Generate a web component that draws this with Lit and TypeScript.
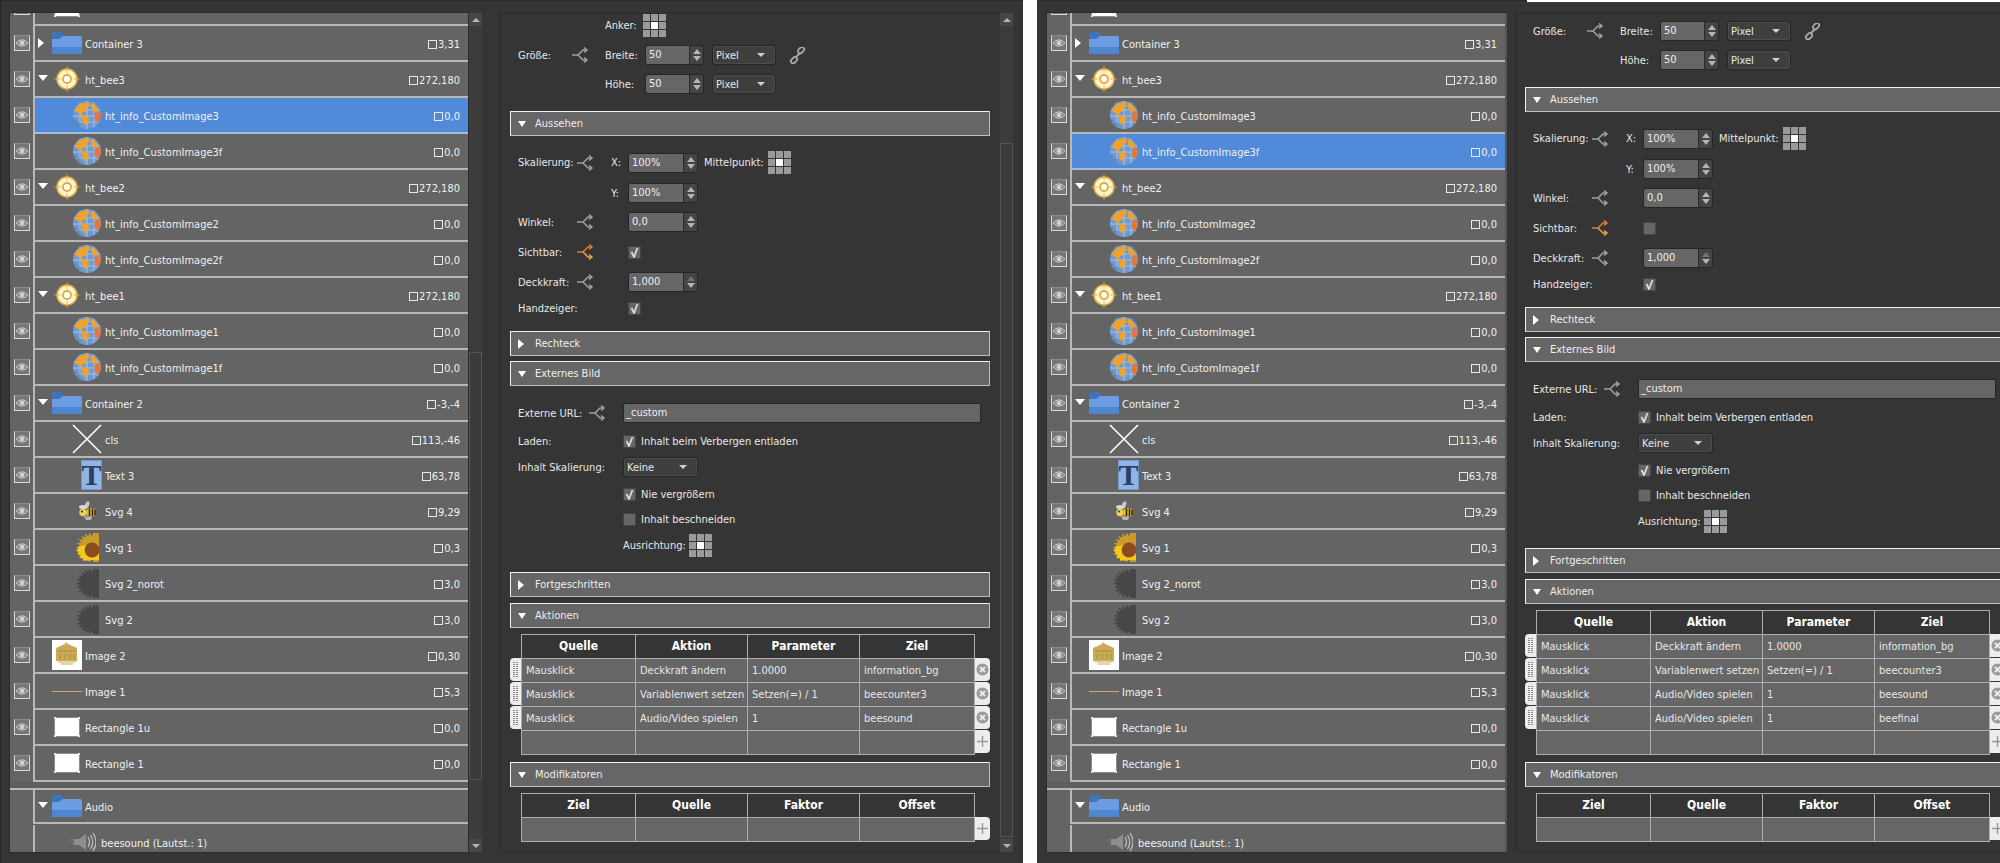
import { LitElement, html, css, unsafeCSS } from 'lit';
import { customElement, property } from 'lit/decorators.js';

const FONT = unsafeCSS('"DejaVu Sans Condensed", "DejaVu Sans", "Liberation Sans", sans-serif');

// small icons shared by both panels
const folderIcon = () => html`<svg width="30" height="22" viewBox="0 0 30 22">
  <path d="M0 2q0-2 2-2h7l3 3v6H0z" fill="#3f74bd"/>
  <path d="M0 7h7l4-3h17q2 0 2 2v9H0z" fill="#6c9de2"/>
  <path d="M0 15h30v6q0 1-1 1H1q-1 0-1-1z" fill="#4f86d2"/>
</svg>`;

const hotspotIcon = () => html`<svg width="28" height="28" viewBox="0 0 28 28">
  <path d="M14 0l1.300 6h-2.600zM14 28l-1.300-6h2.600zM0 14l6-1.300v2.600zM28 14l-6 1.300v-2.600z" fill="#d8a22a"/>
  <circle cx="14" cy="14" r="10" fill="#fff3d2" stroke="#e0b03c" stroke-width="1.500"/>
  <circle cx="14" cy="14" r="4" fill="#fff" stroke="#e0ad38" stroke-width="1.800"/>
  <path d="M14 5v3M14 20v3M5 14h3M20 14h3" stroke="#e6bc5a" stroke-width="1"/>
</svg>`;

const globeIcon = () => html`<svg width="28" height="28" viewBox="0 0 28 28">
  <circle cx="14" cy="14" r="14" fill="#6f9ad0"/>
  <path d="M7 1.800v24.400M14 0v28M21 1.800v24.400M1 9h26M0 15h28M2 21h24" stroke="#a3c3ea" stroke-width="1" fill="none"/>
  <path d="M2 10q1-6 8-8l6-1 1 4-4 2 1 3-4 1-1 3-4-2z" fill="#f0a22e"/>
  <path d="M8 14l6 1 3 3-3 3-1 4-3-3z" fill="#f0a22e"/>
  <path d="M18 2q6 2 8 8l-5 1-3-4z" fill="#f0a22e"/>
  <path d="M21 13l7-2q.5 6-3 11l-3-3z" fill="#e8743a"/>
  <path d="M0 17q1 7 8 10v-5l-4-3z" fill="#5d7fa8" opacity=".6"/>
</svg>`;

const crossIcon = () => html`<svg width="30" height="30" viewBox="0 0 30 30">
  <path d="M1 1l28 28M29 1L1 29" stroke="#fff" stroke-width="1.600"/>
</svg>`;

const beeIcon = () => html`<svg width="20" height="20" viewBox="0 0 20 20">
  <ellipse cx="10" cy="4" rx="2" ry="4" fill="#c8c8c8" transform="rotate(20 10 4)"/>
  <ellipse cx="6" cy="6" rx="4" ry="2" fill="#d8d8d8"/>
  <ellipse cx="14" cy="11.500" rx="5" ry="4.500" fill="#e9bc1e"/>
  <path d="M12.500 7.400v8.200M15.500 7.400v8.200M18 9v5" stroke="#222" stroke-width="1.500"/>
  <circle cx="6" cy="11.500" r="3.700" fill="#efce58"/>
  <circle cx="5" cy="10.500" r=".9" fill="#222"/>
  <path d="M7 15l2 4h5l1-3" fill="#b4b4b4"/>
</svg>`;

// spiky half disc cut at its right side, shared by the sunflower and its grey shadows
const spikes = () => {
  let d = 'M23 0';
  for (let i = 0; i <= 24; i++) {
    const a = Math.PI * (0.45 + (i / 24) * 1.1);
    const r = i % 2 ? 11.500 : 15.500;
    d += `L${(15.500 + Math.cos(a) * r).toFixed(1)} ${(14.500 - Math.sin(a) * r).toFixed(1)}`;
  }
  return d + 'L23 29Z';
};
const sunflowerIcon = () => html`<svg width="23" height="29" viewBox="0 0 23 29">
  <path d="${spikes()}" fill="#c99b2c"/>
  <path d="M1 14l2 1-3 2 3 2-2 2 4 1-2 3 4 0v3l3-1 2 1 3-1h8V20L10 12z" fill="#f6c916"/>
  <circle cx="16" cy="17" r="7.400" fill="#8c4a20"/>
</svg>`;
const shadowIcon = () => html`<svg width="23" height="29" viewBox="0 0 23 29">
  <path d="${spikes()}" fill="#474747"/>
</svg>`;

const houseIcon = () => html`<svg width="30" height="30" viewBox="0 0 30 30">
  <rect width="30" height="30" fill="#fff"/>
  <path d="M4 8l9-4 1-2 2 2 9 4v13H4z" fill="#c9aa55"/>
  <path d="M6 11h18M8 14v5M13 14v5M18 14v5M22 14v5" stroke="#a98c3e" stroke-width="1"/>
  <path d="M6 22h18M9 24h12" stroke="#c9aa55" stroke-width="1"/>
</svg>`;

const lineIcon = () => html`<svg width="30" height="3" viewBox="0 0 30 3"><path d="M0 1.500h30" stroke="#c9ad62" stroke-width="1"/></svg>`;

const rectIcon = () => html`<svg width="26" height="20" viewBox="0 0 26 20">
  <rect x=".5" y=".5" width="25" height="19" fill="none" stroke="#8c8c8c"/>
  <rect x="1" y="1" width="24" height="18" rx="1" fill="#fff"/>
  <path d="M0 0h2v2H0zM24 0h2v2h-2zM0 18h2v2H0zM24 18h2v2h-2z" fill="#e4e4e4"/>
</svg>`;

const speakerIcon = () => html`<svg width="27" height="20" viewBox="0 0 27 20">
  <path d="M1 7h4v3H1zM3 11h3v2H3z" fill="#6a6a78"/>
  <path d="M5 7h5l7-5v16l-7-5H5z" fill="#8e8e8e"/>
  <path d="M19 5q3 5 0 10M21.500 3q4.500 7 0 14M24 1q6 9 0 18" stroke="#bdbdbd" stroke-width="1.300" fill="none"/>
</svg>`;

const eyeIcon = () => html`<svg width="14" height="14" viewBox="0 0 14 14">
  <path d="M1 7q6-6.500 12 0-6 6.500-12 0z" fill="#8a8a8a" stroke="#c8c8c8" stroke-width="1"/>
  <circle cx="7" cy="7" r="2.400" fill="#d0d0d0"/>
</svg>`;

const shareIcon = (orange = false) => {
  const top = orange ? '#e0783a' : '#a0a0a0';
  const bottom = orange ? '#eaa23a' : '#a0a0a0';
  return html`<svg width="17" height="16" viewBox="0 0 17 16" fill="none" stroke-width="1.500">
    <path d="M0 8h6l5-5h3M12 .5l3 2.500-3 2.500" stroke="${top}"/>
    <path d="M6 8l5 5h3M12 10.500l3 2.500-3 2.500" stroke="${bottom}"/>
  </svg>`;
};

const chainIcon = () => html`<svg width="17" height="17" viewBox="0 0 17 17" fill="none" stroke="#a8a8a8" stroke-width="1.800">
  <rect x="8.500" y="1" width="7" height="4.500" rx="2.200" transform="rotate(-45 12 3.200)"/>
  <rect x="1.500" y="11" width="7" height="4.500" rx="2.200" transform="rotate(-45 5 13.200)"/>
  <path d="M6.500 10.500l4-4"/>
</svg>`;

const removeIcon = () => html`<svg width="13" height="13" viewBox="0 0 13 13">
  <circle cx="6.500" cy="6.500" r="6" fill="#9a9a9a"/>
  <path d="M4 4l5 5M9 4l-5 5" stroke="#eee" stroke-width="1.800"/>
</svg>`;

const plusIcon = () => html`<svg width="11" height="11" viewBox="0 0 11 11">
  <path d="M5.500 0v11M0 5.500h11" stroke="#9a9a9a" stroke-width="1.400"/>
</svg>`;

type Row = { name?: string; val?: string; kind: string; level?: number; arrow?: string };

const ROWS: Row[] = [
  { kind: 'rect' },
  { name: 'Container 3', val: '3,31', kind: 'folder', arrow: 'r' },
  { name: 'ht_bee3', val: '272,180', kind: 'hot', arrow: 'd' },
  { name: 'ht_info_CustomImage3', val: '0,0', kind: 'globe', level: 1 },
  { name: 'ht_info_CustomImage3f', val: '0,0', kind: 'globe', level: 1 },
  { name: 'ht_bee2', val: '272,180', kind: 'hot', arrow: 'd' },
  { name: 'ht_info_CustomImage2', val: '0,0', kind: 'globe', level: 1 },
  { name: 'ht_info_CustomImage2f', val: '0,0', kind: 'globe', level: 1 },
  { name: 'ht_bee1', val: '272,180', kind: 'hot', arrow: 'd' },
  { name: 'ht_info_CustomImage1', val: '0,0', kind: 'globe', level: 1 },
  { name: 'ht_info_CustomImage1f', val: '0,0', kind: 'globe', level: 1 },
  { name: 'Container 2', val: '-3,-4', kind: 'folder', arrow: 'd' },
  { name: 'cls', val: '113,-46', kind: 'cross', level: 1 },
  { name: 'Text 3', val: '63,78', kind: 'text', level: 1 },
  { name: 'Svg 4', val: '9,29', kind: 'bee', level: 1 },
  { name: 'Svg 1', val: '0,3', kind: 'sun', level: 1 },
  { name: 'Svg 2_norot', val: '3,0', kind: 'shadow', level: 1 },
  { name: 'Svg 2', val: '3,0', kind: 'shadow', level: 1 },
  { name: 'Image 2', val: '0,30', kind: 'house' },
  { name: 'Image 1', val: '5,3', kind: 'line' },
  { name: 'Rectangle 1u', val: '0,0', kind: 'rect' },
  { name: 'Rectangle 1', val: '0,0', kind: 'rect' },
];

@customElement('tree-panel')
export class TreePanel extends LitElement {
  @property() selected = '';
  @property({ type: Boolean }) narrow = false;

  static styles = css`
    :host { display: flex; flex: none; height: 839px; font: 11px ${FONT}; color: #f0f0f0; }
    .tree { width: 458px; height: 839px; overflow: hidden; background: #646464; box-shadow: 0 0 0 1px #2b2b2b; }
    .rows { margin-top: -23px; }
    .row { display: flex; align-items: center; height: 36px; box-sizing: border-box; border-bottom: 2px solid #b8b8b8; }
    .row.sel { background: #518ad9; border-bottom-color: #a9bdd8; }
    .eye { flex: none; width: 23px; height: 34px; margin-bottom: -2px; padding-bottom: 2px; border-right: 2px solid #b8b8b8; box-sizing: content-box; display: flex; align-items: center; background: #646464; }
    .eye span { width: 14px; height: 14px; margin-left: 4px; border: 1px solid #d8d8d8; border-top-color: #8a8a8a; background: #767676; display: flex; }
    .eye.blank span { display: none; }
    .arrow { flex: none; width: 17px; padding-left: 3px; box-sizing: border-box; height: 10px; }
    .tri-d { width: 0; height: 0; border: 4px solid transparent; border-top: 6px solid #fff; border-left-width: 5px; border-right-width: 5px; border-bottom-width: 0; margin-top: 1px; }
    .tri-r { width: 0; height: 0; border: 5px solid transparent; border-left: 6px solid #fff; border-right-width: 0; }
    .ico { flex: none; width: 30px; display: flex; justify-content: center; align-items: center; }
    .lvl1 { margin-left: 20px; }
    .name { margin-left: 3px; white-space: nowrap; position: relative; top: 1px; }
    .val { margin-left: auto; padding-right: 8px; white-space: nowrap; display: flex; align-items: center; position: relative; top: 1px; }
    .val i { width: 7px; height: 7px; border: 1px solid #e8e8e8; margin-right: 1px; }
    .t-ico { width: 21px; height: 30px; margin-left: 8px; box-sizing: border-box; background: #8fb4e6; border: 1px solid #7397c8; color: #2b3e63; font: bold 30px/28px "Liberation Serif", serif; text-align: center; }
    .gap { height: 6px; border-bottom: 2px solid #b8b8b8; background: #5e5e5e; }
    .audio { height: 34px; }
    .audio .eye { height: 32px; }
    .sb { flex: none; width: 13px; height: 839px; display: flex; flex-direction: column; background: #3c3c3c; margin-left: 1px; }
    .sb.narrow { width: 2px; background: #555; margin-left: 0; }
    .sb b { flex: none; height: 13px; background: #474747; display: flex; align-items: center; justify-content: center; }
    .sb .fill { flex: 1; }
    .sb .handle { flex: none; height: 428px; border: 1px solid #545454; box-sizing: border-box; background: #3a3a3a; }
    .up { width: 0; height: 0; border: 4px solid transparent; border-bottom: 4px solid #b8b8b8; border-top-width: 0; }
    .dn { width: 0; height: 0; border: 4px solid transparent; border-top: 4px solid #b8b8b8; border-bottom-width: 0; }
  `;

  icon(kind: string) {
    if (kind === 'folder') return folderIcon();
    if (kind === 'hot') return hotspotIcon();
    if (kind === 'globe') return globeIcon();
    if (kind === 'cross') return crossIcon();
    if (kind === 'text') return html`<span class="t-ico">T</span>`;
    if (kind === 'bee') return beeIcon();
    if (kind === 'sun') return sunflowerIcon();
    if (kind === 'shadow') return shadowIcon();
    if (kind === 'house') return houseIcon();
    if (kind === 'line') return lineIcon();
    return rectIcon();
  }

  renderRow(r: Row) {
    return html`<div class="row ${r.name && r.name === this.selected ? 'sel' : ''}">
      <div class="eye"><span>${eyeIcon()}</span></div>
      <div class="arrow">${r.arrow === 'd' ? html`<div class="tri-d"></div>` : r.arrow === 'r' ? html`<div class="tri-r"></div>` : ''}</div>
      <div class="ico ${r.level ? 'lvl1' : ''}">${this.icon(r.kind)}</div>
      ${r.name ? html`<span class="name">${r.name}</span>` : ''}
      ${r.val ? html`<span class="val"><i></i>${r.val}</span>` : ''}
    </div>`;
  }

  render() {
    return html`
      <div class="tree">
        <div class="rows">
          ${ROWS.map((r) => this.renderRow(r))}
          <div class="gap"></div>
          <div class="row audio">
            <div class="eye blank"></div>
            <div class="arrow"><div class="tri-d"></div></div>
            <div class="ico">${folderIcon()}</div>
            <span class="name">Audio</span>
          </div>
          <div class="row" style="border:0">
            <div class="eye blank"></div>
            <div class="arrow"></div>
            <div class="ico lvl1" style="margin-left:17px;width:27px">${speakerIcon()}</div>
            <span class="name" style="margin-left:5px">beesound (Lautst.: 1)</span>
          </div>
        </div>
      </div>
      ${this.narrow
        ? html`<div class="sb narrow"></div>`
        : html`<div class="sb">
            <b><div class="up"></div></b>
            <div class="fill"></div>
            <div class="handle"></div>
            <div class="fill" style="flex:none;height:59px"></div>
            <b><div class="dn"></div></b>
          </div>`}
    `;
  }
}

type Action = string[];

@customElement('props-panel')
export class PropsPanel extends LitElement {
  @property({ type: Number }) offset = 0;
  @property({ type: Boolean }) visible = true;
  @property({ attribute: false }) actions: Action[] = [];
  @property({ type: Boolean }) clipped = false;

  static styles = css`
    :host { display: flex; flex: none; height: 839px; font: 11px ${FONT}; color: #e8e8e8; }
    .frame { width: 500px; height: 839px; border: 1px solid #2a2a2a; border-right: 0; box-sizing: border-box; overflow: hidden; background: #353535; }
    .row { display: flex; align-items: center; height: 20px; padding-left: 17px; white-space: nowrap; }
    .r16 { height: 16px; }
    .r23 { height: 23px; }
    .sec { display: flex; align-items: center; height: 25px; width: 480px; margin-left: 9px; box-sizing: border-box; background: #666; border: 1px solid #bdbdbd; border-top-color: #f2f2f2; border-left-color: #f2f2f2; color: #eee; padding-left: 7px; }
    .sec span { margin-left: 8px; }
    .td { width: 0; height: 0; border: 4px solid transparent; border-top: 6px solid #fff; border-left-width: 4.500px; border-right-width: 4.500px; border-bottom-width: 0; margin-right: 1px; }
    .tr { width: 0; height: 0; border: 5px solid transparent; border-left: 6px solid #fff; border-right-width: 0; margin-right: 3px; }
    .spin { display: flex; height: 20px; box-sizing: border-box; border: 1px solid #262626; border-radius: 3px; flex: none; overflow: hidden; }
    .spin .v { flex: 1; background: #666; padding-left: 3px; line-height: 17px; color: #eee; }
    .spin .st { flex: none; width: 13px; background: #444; border-left: 1px solid #2a2a2a; display: flex; flex-direction: column; align-items: center; justify-content: center; gap: 2px; }
    .up { width: 0; height: 0; border: 4px solid transparent; border-bottom: 5px solid #b4b4b4; border-top-width: 0; }
    .up.dim { border-bottom-color: #707070; }
    .dn { width: 0; height: 0; border: 4px solid transparent; border-top: 5px solid #b4b4b4; border-bottom-width: 0; }
    .sel { flex: none; display: flex; align-items: center; justify-content: space-between; height: 20px; box-sizing: border-box; border: 1px solid #262626; border-radius: 3px; background: #3f3f3f; box-shadow: inset 0 0 0 1px #4c4c4c; padding: 0 10px 0 3px; }
    .sel .dn { border-top: 4px solid #d0d0d0; border-left-width: 4px; border-right-width: 4px; }
    .check { flex: none; width: 13px; height: 13px; box-sizing: border-box; background: #666; border: 1px solid #444; display: flex; }
    .grid { flex: none; display: grid; grid-template-columns: repeat(3, 7px); grid-auto-rows: 7px; gap: 1px; }
    .grid i { background: #9a9a9a; }
    .grid i.c { background: #fff; }
    .ml16 { margin-left: 16px; }
    .w38 { flex: none; width: 38px; }
    .w40 { flex: none; width: 40px; }
    .w54 { flex: none; width: 54px; }
    .w59 { flex: none; width: 59px; }
    .w64 { flex: none; width: 64px; }
    .w66 { flex: none; width: 66px; }
    .w71 { flex: none; width: 71px; }
    .w105 { flex: none; width: 105px; }
    .w110 { flex: none; width: 110px; }
    .axis { flex: none; margin-left: 17px; width: 17px; }
    .url { flex: none; margin-left: 17px; width: 358px; height: 20px; box-sizing: border-box; background: #666; border: 1px solid #262626; border-radius: 2px; line-height: 18px; padding-left: 2px; color: #eee; }
    .tbl { margin-left: 9px; }
    .tr-row { display: flex; height: 24px; }
    .hd { flex: none; width: 11px; height: 24px; }
    .hd.grip { height: 23px; box-sizing: border-box; background: #ededed; border-radius: 4px 0 0 4px; display: flex; justify-content: center; gap: 1px; padding: 4px 0; }
    .hd.grip u { width: 2px; background: repeating-linear-gradient(#888 0 1px, transparent 1px 2px); text-decoration: none; }
    .cell { flex: none; box-sizing: border-box; background: #666; border-top: 1px solid #aeaeae; border-left: 1px solid #aeaeae; padding-left: 4px; line-height: 23px; color: #e8e8e8; white-space: nowrap; overflow: hidden; }
    .c1 { width: 114px; }
    .c2 { width: 112px; }
    .c3 { width: 112px; }
    .c4 { width: 116px; border-right: 1px solid #aeaeae; }
    .th { background: #353535; font: bold 12px/23px ${FONT}; color: #fff; text-align: center; padding-left: 0; }
    .end { border-bottom: 1px solid #aeaeae; height: 25px; }
    .btn { flex: none; width: 15px; height: 23px; background: #ededed; border-radius: 0 4px 4px 0; display: flex; align-items: center; justify-content: center; }
    .mt5 { margin-top: 5px; } .mt6 { margin-top: 6px; } .mt7 { margin-top: 7px; } .mt8 { margin-top: 8px; }
    .mt9 { margin-top: 9px; } .mt10 { margin-top: 10px; } .mt15 { margin-top: 15px; } .mt17 { margin-top: 17px; }
    .sb { flex: none; width: 13px; height: 839px; display: flex; flex-direction: column; background: #3c3c3c; }
    .sb b { flex: none; height: 13px; background: #474747; display: flex; align-items: center; justify-content: center; }
    .sb .handle { flex: 1; border: 1px solid #545454; box-sizing: border-box; background: #3a3a3a; margin-bottom: 2px; }
    .sb .up, .sb .dn { border-width: 4px; }
    .sb .up { border-top-width: 0; border-bottom-width: 4px; }
    .sb .dn { border-bottom-width: 0; border-top-width: 4px; }
  `;

  spin(val: string, width: number, dim = false) {
    return html`<div class="spin" style="width:${width}px">
      <div class="v">${val}</div>
      <div class="st"><div class="up ${dim ? 'dim' : ''}"></div><div class="dn"></div></div>
    </div>`;
  }

  select(val: string, width: number) {
    return html`<div class="sel" style="width:${width}px"><span>${val}</span><div class="dn"></div></div>`;
  }

  check(on: boolean) {
    return html`<div class="check">${on
      ? html`<svg width="11" height="11" viewBox="0 0 11 11"><path d="M2.500 5l2.500 5 3.500-9" fill="none" stroke="#e0e0e0" stroke-width="1.700"/></svg>`
      : ''}</div>`;
  }

  grid() {
    return html`<div class="grid">${[0, 1, 2, 3, 4, 5, 6, 7, 8].map((i) => html`<i class="${i === 4 ? 'c' : ''}"></i>`)}</div>`;
  }

  section(title: string, open: boolean, mt: string) {
    return html`<div class="sec ${mt}"><div class="${open ? 'td' : 'tr'}"></div><span>${title}</span></div>`;
  }

  table(head: string[], rows: Action[], mt: string) {
    const cols = ['c1', 'c2', 'c3', 'c4'];
    return html`<div class="tbl ${mt}">
      <div class="tr-row">
        <div class="hd"></div>
        ${head.map((h, i) => html`<div class="cell th ${cols[i]}">${h}</div>`)}
      </div>
      ${rows.map((r) => html`<div class="tr-row">
        <div class="hd grip"><u></u><u></u></div>
        ${r.map((c, i) => html`<div class="cell ${cols[i]}">${c}</div>`)}
        <div class="btn">${removeIcon()}</div>
      </div>`)}
      <div class="tr-row">
        <div class="hd"></div>
        ${cols.map((c) => html`<div class="cell end ${c}"></div>`)}
        <div class="btn">${plusIcon()}</div>
      </div>
    </div>`;
  }

  render() {
    // the anchor row (23 + 8px) is scrolled out of view in the second window
    return html`
      <div class="frame">
        ${this.offset
          ? html`<div style="height:${31 - this.offset}px"></div>`
          : html`<div class="row r23" style="padding-left:104px"><span class="w38">Anker:</span>${this.grid()}</div><div style="height:8px"></div>`}

        <div class="row">
          <span class="w54">Größe:</span>${shareIcon()}
          <span class="w40 ml16">Breite:</span>${this.spin('50', 59)}
          <span style="width:8px"></span>${this.select('Pixel', 64)}
          <span style="width:13px"></span>${chainIcon()}
        </div>
        <div class="row mt9" style="padding-left:104px">
          <span class="w40">Höhe:</span>${this.spin('50', 59)}
          <span style="width:8px"></span>${this.select('Pixel', 64)}
        </div>

        ${this.section('Aussehen', true, 'mt17')}

        <div class="row r23 mt15">
          <span class="w59">Skalierung:</span>${shareIcon()}
          <span class="axis">X:</span>${this.spin('100%', 70)}
          <span style="width:6px"></span><span class="w64">Mittelpunkt:</span>${this.grid()}
        </div>
        <div class="row mt9" style="padding-left:93px"><span class="axis">Y:</span>${this.spin('100%', 70)}</div>
        <div class="row mt9"><span class="w59">Winkel:</span>${shareIcon()}<span class="axis"></span>${this.spin('0,0', 70)}</div>
        <div class="row mt10"><span class="w59">Sichtbar:</span>${shareIcon(true)}<span class="axis"></span>${this.check(this.visible)}</div>
        <div class="row mt10"><span class="w59">Deckkraft:</span>${shareIcon()}<span class="axis"></span>${this.spin('1,000', 70, true)}</div>
        <div class="row r16 mt8"><span class="w110">Handzeiger:</span>${this.check(true)}</div>

        ${this.section('Rechteck', false, 'mt15')}
        ${this.section('Externes Bild', true, 'mt5')}

        <div class="row mt17"><span class="w71">Externe URL:</span>${shareIcon()}<div class="url">_custom</div></div>
        <div class="row r16 mt10"><span class="w105">Laden:</span>${this.check(true)}<span style="margin-left:5px">Inhalt beim Verbergen entladen</span></div>
        <div class="row mt8"><span class="w105">Inhalt Skalierung:</span>${this.select('Keine', 75)}</div>
        <div class="row r16 mt9" style="padding-left:122px">${this.check(true)}<span style="margin-left:5px">Nie vergrößern</span></div>
        <div class="row r16 mt9" style="padding-left:122px">${this.check(false)}<span style="margin-left:5px">Inhalt beschneiden</span></div>
        <div class="row r23 mt7" style="padding-left:122px"><span class="w66">Ausrichtung:</span>${this.grid()}</div>

        ${this.section('Fortgeschritten', false, 'mt15')}
        ${this.section('Aktionen', true, 'mt6')}
        ${this.table(['Quelle', 'Aktion', 'Parameter', 'Ziel'], this.actions, 'mt6')}
        ${this.section('Modifikatoren', true, 'mt8')}
        ${this.table(['Ziel', 'Quelle', 'Faktor', 'Offset'], [], 'mt6')}
      </div>
      ${this.clipped
        ? ''
        : html`<div class="sb">
            <b><div class="up"></div></b>
            <div class="handle" style="margin-top:117px"></div>
            <b><div class="dn"></div></b>
          </div>`}
    `;
  }
}

const BASE_ACTIONS: Action[] = [
  ['Mausklick', 'Deckkraft ändern', '1.0000', 'information_bg'],
  ['Mausklick', 'Variablenwert setzen', 'Setzen(=) / 1', 'beecounter3'],
  ['Mausklick', 'Audio/Video spielen', '1', 'beesound'],
];

@customElement('app-root')
export class AppRoot extends LitElement {
  static styles = css`
    :host { display: flex; width: 2000px; height: 863px; background: #fff; overflow: hidden; }
    .win { flex: none; height: 863px; background: #353535; box-sizing: border-box; overflow: hidden; }
    .a { width: 1023px; border-left: 1px solid #262626; }
    .b { width: 963px; margin-left: 14px; }
    .strip { height: 3px; background: #2e2e2e; border-bottom: 1px solid #3d3d3d; box-sizing: border-box; }
    .strip div { height: 2px; margin-left: 490px; background: #fff; }
    .body { display: flex; padding-top: 10px; }
    .a .body { padding-left: 9px; }
    .b .body { padding-left: 10px; }
    .a props-panel { margin-left: 18px; }
    .b props-panel { margin-left: 8px; }
  `;

  render() {
    return html`
      <div class="win a">
        <div class="strip"></div>
        <div class="body">
          <tree-panel selected="ht_info_CustomImage3"></tree-panel>
          <props-panel .offset=${0} .visible=${true} .actions=${BASE_ACTIONS}></props-panel>
        </div>
      </div>
      <div class="win b">
        <div class="strip"><div></div></div>
        <div class="body">
          <tree-panel selected="ht_info_CustomImage3f" narrow></tree-panel>
          <props-panel
            .offset=${24}
            .visible=${false}
            clipped
            .actions=${[...BASE_ACTIONS, ['Mausklick', 'Audio/Video spielen', '1', 'beefinal']]}
          ></props-panel>
        </div>
      </div>
    `;
  }
}
